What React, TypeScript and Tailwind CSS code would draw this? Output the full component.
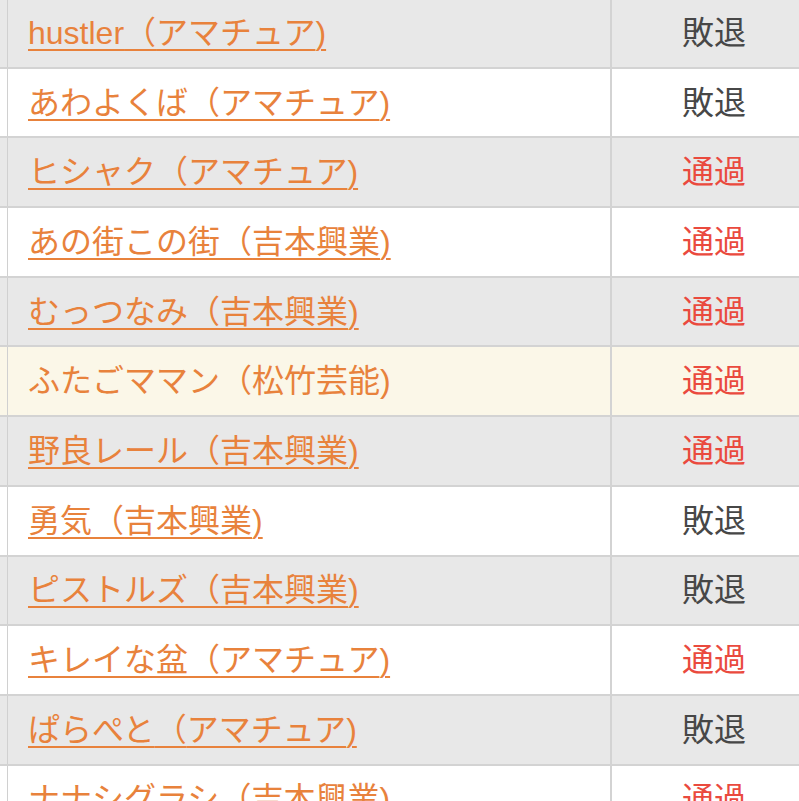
type Row = {
  name: string
  office: string
  result: '通過' | '敗退'
  link: boolean
  tone: 'gray' | 'white' | 'cream'
}

const rows: Row[] = [
  { name: 'hustler', office: 'アマチュア', result: '敗退', link: true, tone: 'gray' },
  { name: 'あわよくば', office: 'アマチュア', result: '敗退', link: true, tone: 'white' },
  { name: 'ヒシャク', office: 'アマチュア', result: '通過', link: true, tone: 'gray' },
  { name: 'あの街この街', office: '吉本興業', result: '通過', link: true, tone: 'white' },
  { name: 'むっつなみ', office: '吉本興業', result: '通過', link: true, tone: 'gray' },
  { name: 'ふたごママン', office: '松竹芸能', result: '通過', link: false, tone: 'cream' },
  { name: '野良レール', office: '吉本興業', result: '通過', link: true, tone: 'gray' },
  { name: '勇気', office: '吉本興業', result: '敗退', link: true, tone: 'white' },
  { name: 'ピストルズ', office: '吉本興業', result: '敗退', link: true, tone: 'gray' },
  { name: 'キレイな盆', office: 'アマチュア', result: '通過', link: true, tone: 'white' },
  { name: 'ぱらぺと', office: 'アマチュア', result: '敗退', link: true, tone: 'gray' },
  { name: 'ナナシグラシ', office: '吉本興業', result: '通過', link: true, tone: 'white' },
]

const toneClass = {
  gray: 'bg-[#e8e8e8]',
  white: 'bg-white',
  cream: 'bg-[#fbf7e8]',
}

export default function App() {
  return (
    <div
      className="h-[801px] w-[799px] overflow-hidden bg-white"
      style={{ fontFamily: '"Liberation Sans", "Noto Sans CJK JP", sans-serif' }}
    >
      <div className="-mt-[1px] w-[816px]">
        {rows.map((row) => (
          <div
            key={row.name}
            className={`flex h-[69.7px] border-b-2 border-[#d3d3d3] ${toneClass[row.tone]}`}
          >
            <div className="w-[8px] shrink-0 border-r border-[#d0d0d0]" />
            <div className="flex w-[604px] shrink-0 items-center border-r-2 border-[#d3d3d3] pl-[20px] text-[32px] leading-none text-[#e8823c]">
              {row.link ? (
                <a href="#" className="underline decoration-2 underline-offset-[5px]">
                  {row.name}（{row.office})
                </a>
              ) : (
                <span>
                  {row.name}（{row.office})
                </span>
              )}
            </div>
            <div
              className={`flex flex-1 items-center justify-center text-[32px] leading-none ${
                row.result === '通過' ? 'text-[#ea4a3e]' : 'text-[#474747]'
              }`}
            >
              {row.result}
            </div>
          </div>
        ))}
      </div>
    </div>
  )
}
